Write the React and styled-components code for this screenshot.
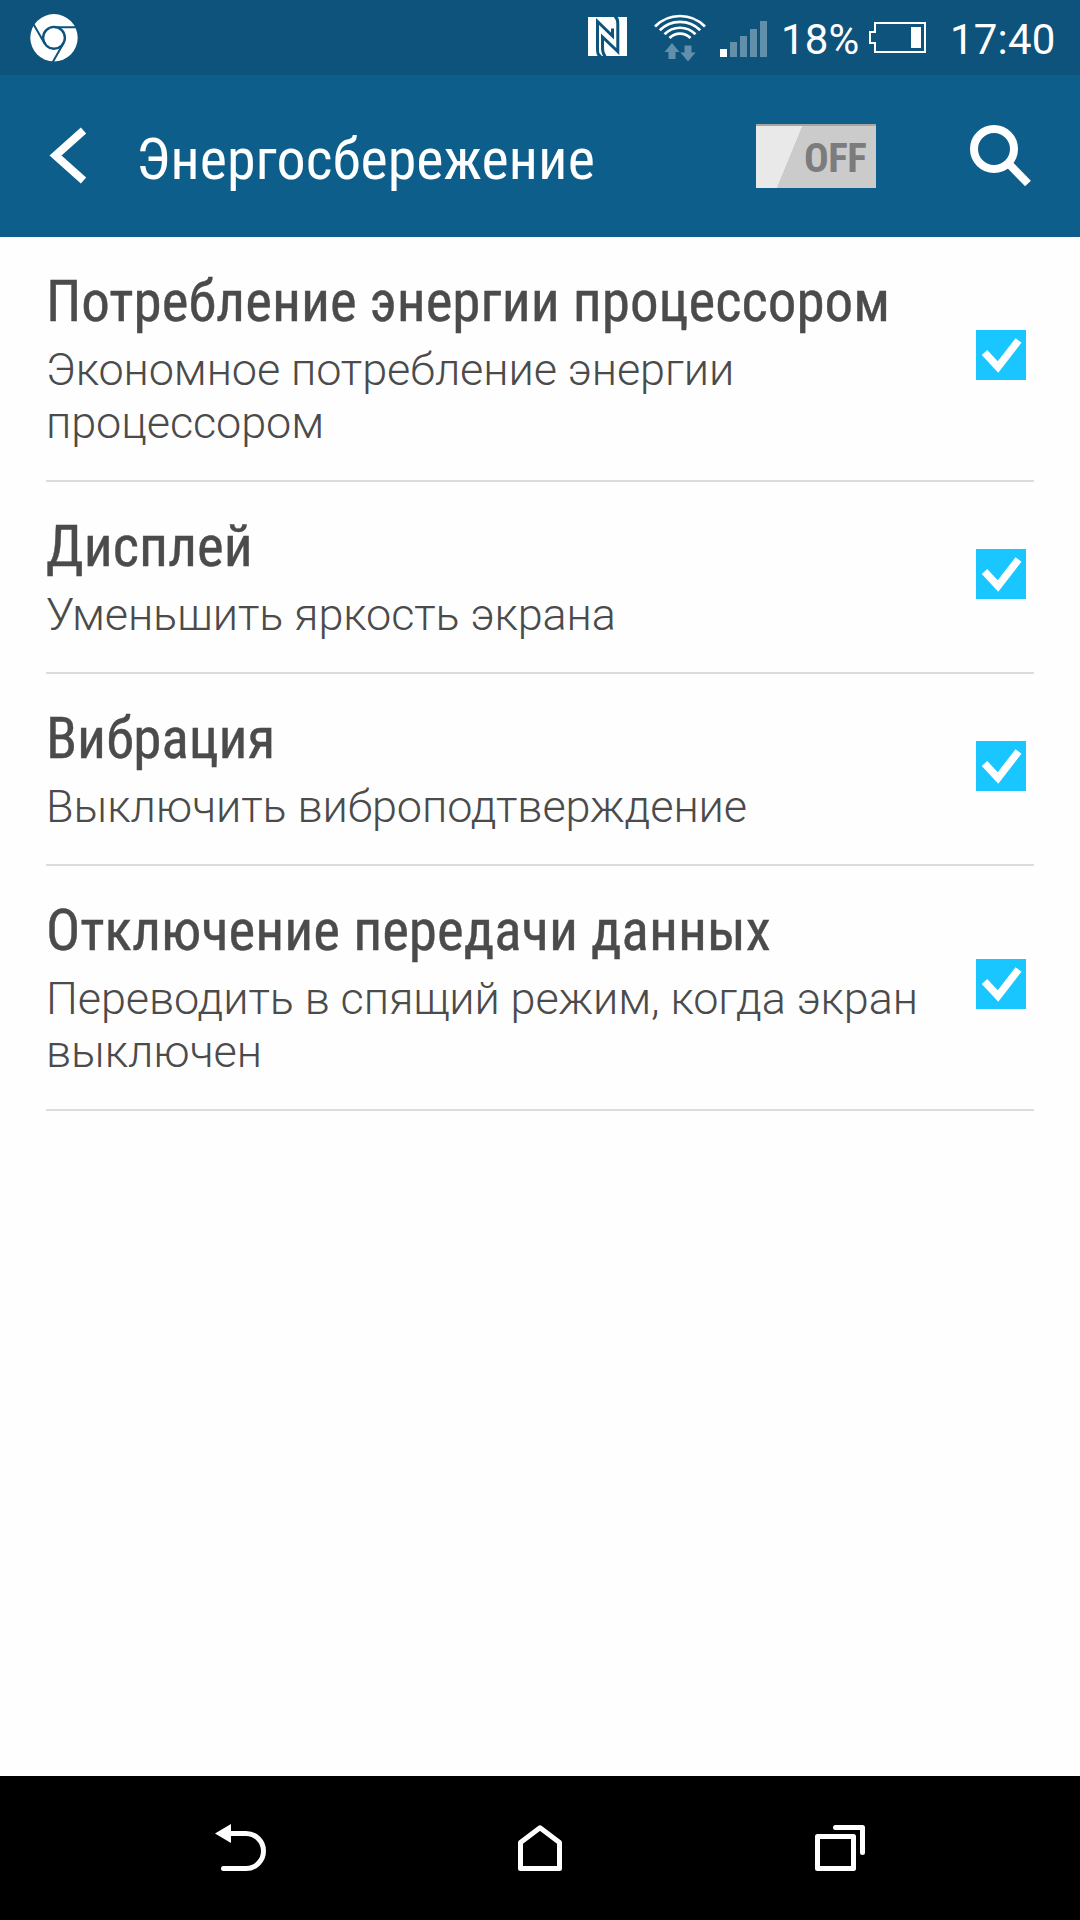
import React from 'react'
import styled, { createGlobalStyle } from 'styled-components'

const items = [
  { title: 'Потребление энергии процессором', text: 'Экономное потребление энергии процессором' },
  { title: 'Дисплей', text: 'Уменьшить яркость экрана' },
  { title: 'Вибрация', text: 'Выключить виброподтверждение' },
  { title: 'Отключение передачи данных', text: 'Переводить в спящий режим, когда экран выключен' },
]

const ChromeIcon = () => (
  <svg width="48" height="48" viewBox="30 14 48 48" fill="none" stroke="#0e537c" strokeWidth="2">
    <circle cx="54" cy="37.8" r="23.7" fill="#fff" stroke="none" />
    <circle cx="54" cy="37.8" r="10.9" strokeWidth="2.4" />
    <path d="M54 27.2H77M44.5 43.3L32.5 22.5M63.5 43.3L52.5 62.4" />
  </svg>
)

const NfcIcon = () => (
  <svg width="39" height="39" viewBox="0 0 39 39" fill="none" stroke="#0e537c" strokeWidth="3">
    <path d="M0 0H39V39H0Z" fill="#fff" stroke="none" />
    <path d="M13 39.500C10 38 9.500 36.500 9.500 32V4.500L24.500 19V11.500M26.500 -.5C29.500 1 29.800 3 29.800 7V34.500L14.500 20V30C14.500 35 15 37.500 17.500 39.500" />
  </svg>
)

const WifiIcon = () => (
  <svg width="52" height="50" viewBox="0 0 52 50" fill="none" stroke="#fff" strokeWidth="2.7">
    <path d="M1 14.500A35 35 0 0 1 51 14.500M5.800 18.300A28.500 28.500 0 0 1 46.200 18.300M10.500 22.200A21.800 21.800 0 0 1 41.500 22.200M15.500 26A15 15 0 0 1 36.500 26" />
    <path d="M18 31L25.500 40H21.500V47H14.500V40H10.500ZM30.500 33.500H37.500V40.500H41.500L34 49.500L26.500 40.500H30.500Z" fill="#6290ab" stroke="none" />
  </svg>
)

const SignalIcon = () => (
  <svg width="47" height="36" viewBox="0 0 47 36" fill="#6290ab">
    <path d="M0 28H7V36H0Z" fill="#fff" />
    <path d="M10 21H17V36H10ZM20 15H27V36H20ZM30 8H37V36H30ZM40 0H47V36H40Z" />
  </svg>
)

const BatteryIcon = () => (
  <svg width="57" height="31" viewBox="0 0 57 31" fill="none" stroke="#fff" strokeWidth="2">
    <path d="M6 1H56V30H6V21H1V10H6Z" />
    <path d="M42 5H52V26H42Z" fill="#fff" stroke="none" />
  </svg>
)

const App = () => {
  return (
    <Screen>
      <GlobalStyle />
      <StatusBar>
        <ChromeIcon />
        <StatusRight>
          <Nfc><NfcIcon /></Nfc>
          <Wifi><WifiIcon /></Wifi>
          <Signal><SignalIcon /></Signal>
          <Percent>18%</Percent>
          <BatteryIcon />
          <Clock>17:40</Clock>
        </StatusRight>
      </StatusBar>
      <Header>
        <Back>
          <svg width="37" height="57" viewBox="0 0 37 57" fill="none" stroke="#fff" strokeWidth="8">
            <path d="M33.500 3.500L5.500 28.500L33.500 53.500" />
          </svg>
        </Back>
        <Title>Энергосбережение</Title>
        <Toggle>
          <span>OFF</span>
        </Toggle>
        <Search>
          <svg width="62" height="62" viewBox="0 0 62 62" fill="none" stroke="#fff" strokeWidth="8">
            <circle cx="24" cy="24" r="20" />
            <path d="M38.500 38.500L58 58.500" />
          </svg>
        </Search>
      </Header>
      <List>
        {items.map((item) => (
          <Row key={item.title}>
            <Texts>
              <RowTitle>{item.title}</RowTitle>
              <RowText>{item.text}</RowText>
            </Texts>
            <Check>
              <svg width="50" height="50" viewBox="0 0 50 50" fill="none" stroke="#fff" strokeWidth="7.500">
                <path d="M8.500 22.500L22 37L42.500 10.500" />
              </svg>
            </Check>
          </Row>
        ))}
      </List>
      <NavBar>
        <svg width="52" height="48" viewBox="0 0 52 48" fill="none" stroke="#fff" strokeWidth="5" strokeLinecap="round">
          <path d="M14 9.500H31A17.500 17.500 0 0 1 31 44.500H8.500" />
          <path d="M0 9.500L16 0V19Z" fill="#fff" stroke="none" />
        </svg>
        <svg width="44" height="47" viewBox="0 0 44 47" fill="none" stroke="#fff" strokeWidth="5" strokeLinejoin="round">
          <path d="M1.500 17.500L21 2.800L40.500 17.500V43.500H1.500Z" />
        </svg>
        <svg width="50" height="46" viewBox="0 0 50 46" fill="none" stroke="#fff" strokeWidth="5" strokeLinejoin="round" strokeLinecap="round">
          <path d="M2.500 11.500H38.500V43.500H2.500ZM20.500 2.500H47.500V27.500" />
        </svg>
      </NavBar>
    </Screen>
  )
}

export default App

const GlobalStyle = createGlobalStyle`
  body {
    margin: 0;
    background: #fff;
    font-family: Roboto, 'Noto Sans', sans-serif;
  }
  svg {
    display: block;
    flex-shrink: 0;
    overflow: visible;
  }
`
const Screen = styled.div`
  display: flex;
  flex-direction: column;
  width: 1080px;
  height: 1920px;
  background: #fefefe;
`
const StatusBar = styled.div`
  display: flex;
  align-items: center;
  justify-content: space-between;
  box-sizing: border-box;
  height: 75px;
  padding: 0 26px 0 30px;
  background: #0e537c;
  color: #fff;
  font-size: 42px;
  letter-spacing: 0.2px;
`
const StatusRight = styled.div`
  display: flex;
  align-items: center;
`
const Nfc = styled.div`
  margin-bottom: 2px;
  overflow: hidden;
`
const Wifi = styled.div`
  margin: 0 14px 1px 27px;
`
const Signal = styled.div`
  margin-top: 3px;
`
const Percent = styled.div`
  width: 88px;
  margin-left: 14px;
  padding-top: 3px;
  white-space: nowrap;
`
const Clock = styled.div`
  width: 104px;
  margin-left: 24px;
  padding-top: 3px;
  white-space: nowrap;
`
const Header = styled.header`
  display: flex;
  height: 162px;
  background: #0d5e8b;
  color: #fff;
`
const Back = styled.div`
  padding: 52px 0 0 50px;
`
const Title = styled.h1`
  width: 620px;
  margin: 50px 0 0 49px;
  font-family: 'Roboto Condensed', Roboto, sans-serif;
  font-stretch: 75%;
  font-size: 58px;
  line-height: 68px;
  font-weight: 400;
  white-space: nowrap;
`
const Toggle = styled.div`
  box-sizing: border-box;
  width: 120px;
  height: 64px;
  margin-top: 49px;
  padding-left: 48px;
  border-top: 2px solid #a5a5a5;
  background: linear-gradient(112.300deg, #e9e9e9 42.500px, #cbcbcb 43px);
  color: #7c7c7c;
  font-family: 'Roboto Condensed', Roboto, sans-serif;
  font-stretch: 75%;
  font-size: 41px;
  font-weight: 700;
  line-height: 64px;
  letter-spacing: -0.5px;
`
const Search = styled.div`
  margin: 50px 0 0 94px;
`
const List = styled.main`
  flex: 1;
  padding: 0 46px;
`
const Row = styled.div`
  display: flex;
  align-items: center;
  padding: 30px 8px 31px 0;
  border-bottom: 2px solid #dcdcdc;
  color: #4b4b4b;
`
const Texts = styled.div`
  flex: 1;
`
const RowTitle = styled.div`
  padding-top: 1px;
  font-family: 'Roboto Condensed', Roboto, sans-serif;
  font-stretch: 75%;
  font-size: 57px;
  font-weight: 450;
  line-height: 68px;
  white-space: nowrap;
  -webkit-text-stroke: 0.4px #4b4b4b;
`
const RowText = styled.div`
  width: 890px;
  margin-top: 7px;
  font-size: 45px;
  font-weight: 300;
  line-height: 53px;
  letter-spacing: -0.1px;
`
const Check = styled.div`
  width: 50px;
  height: 50px;
  margin-bottom: 6px;
  background: #1ac6ff;
`
const NavBar = styled.nav`
  display: flex;
  justify-content: space-between;
  align-items: center;
  box-sizing: border-box;
  height: 144px;
  padding: 0 215px;
  background: #000;
`
